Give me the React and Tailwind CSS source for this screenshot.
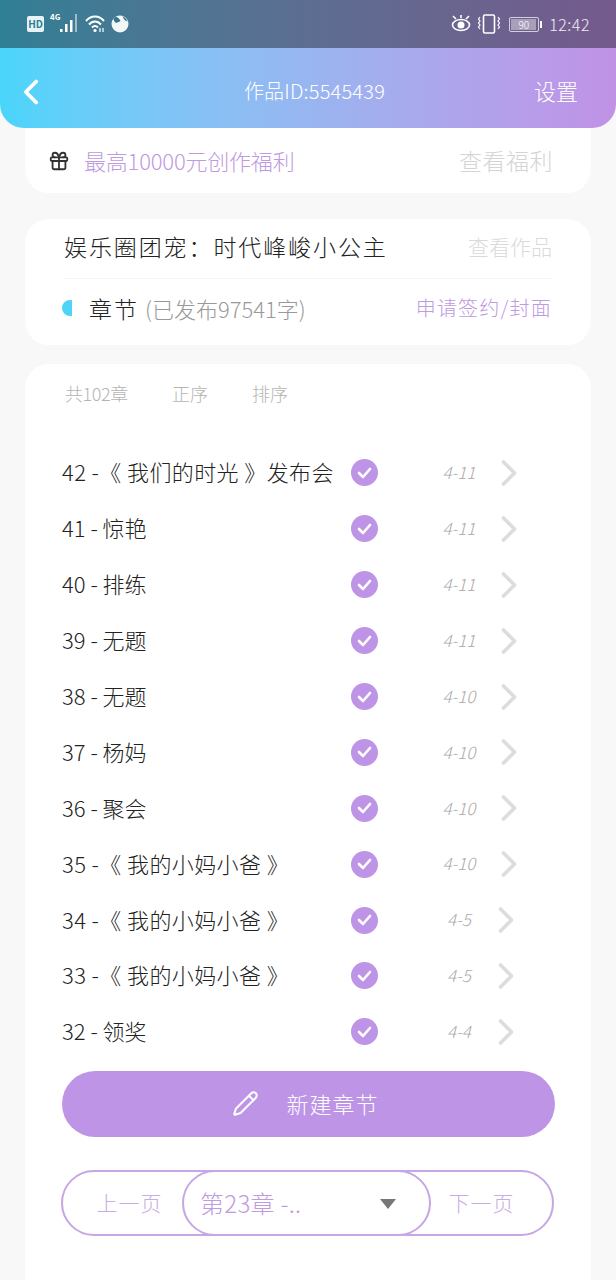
import { ChevronLeft, ChevronRight, Gift, Pencil } from 'lucide-react';

const chapters = [
    { title: '42 -《 我们的时光 》发布会', date: '4-11', wide: true },
    { title: '41 - 惊艳', date: '4-11' },
    { title: '40 - 排练', date: '4-11' },
    { title: '39 - 无题', date: '4-11' },
    { title: '38 - 无题', date: '4-10' },
    { title: '37 - 杨妈', date: '4-10' },
    { title: '36 - 聚会', date: '4-10' },
    { title: '35 -《 我的小妈小爸 》', date: '4-10', wide: true },
    { title: '34 -《 我的小妈小爸 》', date: '4-5', short: true, wide: true },
    { title: '33 -《 我的小妈小爸 》', date: '4-5', short: true, wide: true },
    { title: '32 - 领奖', date: '4-4', short: true },
];

function StatusBar() {
    return (
        <div className="h-12 flex items-center justify-between pl-[27px] pr-[26px] bg-gradient-to-r from-[#2f7f95] to-[#755a8d] text-white">
            <div className="flex items-center">
                <div className="w-[17px] h-[16px] rounded-[2px] bg-[#e8f3f6] text-[#2f7f95] text-[10px] leading-[16px] font-bold text-center">HD</div>
                <svg width="30" height="22" viewBox="0 0 30 22" className="ml-[6px] -mt-[2px]">
                    <text x="0" y="8" fontSize="8" fontWeight="700" fill="#fff">4G</text>
                    <rect x="10" y="17" width="2.5" height="3" fill="#fff" />
                    <rect x="15" y="12" width="2.5" height="8" fill="#fff" />
                    <rect x="20" y="8" width="2.5" height="12" fill="#fff" />
                    <rect x="25" y="2" width="2" height="18" fill="#ffffff80" />
                </svg>
                <svg width="21" height="18" viewBox="0 0 21 18" fill="none" stroke="#fff" strokeWidth="2" className="ml-[5px]">
                    <path d="M1 6 C6 0 14 0 19 6" />
                    <path d="M4 9.5 C7.5 5.5 12.5 5.5 16 9.5" />
                    <path d="M7 12.5 C9 10.5 11 10.5 13 12.5" />
                    <circle cx="10" cy="15.5" r="1.6" fill="#fff" stroke="none" />
                    <path d="M15 13 v4 M18 13 v4" strokeWidth="1.2" />
                </svg>
                <svg width="18" height="18" viewBox="0 0 18 18" className="ml-[5px]">
                    <circle cx="9" cy="9" r="8.5" fill="#f2f7f8" />
                    <path d="M5 1.5 C7 3 9 4 9.5 6 C9 7 6.5 7 5 8 C3.5 7 2.5 5 2.5 3.5 Z M11.5 1 C13.5 2 15.5 4 16.5 6.5 C14.5 6.5 12.5 4 11.5 1 Z" fill="#3a7590" />
                </svg>
            </div>
            <div className="flex items-center">
                <svg width="20" height="18" viewBox="0 0 20 18" fill="none" stroke="#fff" strokeWidth="1.6">
                    <path d="M2 1 L5 4 M18 1 L15 4 M10 0 V3" />
                    <ellipse cx="10" cy="10" rx="8.5" ry="5.5" />
                    <circle cx="10" cy="10" r="3.5" fill="#fff" stroke="none" />
                </svg>
                <svg width="24" height="20" viewBox="0 0 24 20" fill="none" stroke="#fff" strokeWidth="1.4" className="ml-[6px]">
                    <rect x="6.5" y="1" width="11" height="18" rx="1.5" strokeWidth="1.6" />
                    <path d="M3 3 L1.5 5 L3 7 L1.5 9 L3 11 L1.5 13 L3 15 M21 3 L22.5 5 L21 7 L22.5 9 L21 11 L22.5 13 L21 15" strokeWidth="1.2" />
                </svg>
                <div className="ml-[8px] w-[30px] h-[15px] border border-white/70 rounded-[2px] p-[1px]">
                    <div className="w-[25px] h-full bg-white/40 text-[10px] leading-[11px] text-center text-white">90</div>
                </div>
                <div className="w-[2px] h-[7px] bg-white ml-[1px]"></div>
                <span className="ml-[7px] text-[16px] font-light tracking-[0.5px] text-white/90">12:42</span>
            </div>
        </div>
    );
}

export default function App() {
    return (
        <div className="w-[616px] h-[1280px] overflow-hidden bg-[#f8f8f8] font-['Noto_Sans_CJK_SC',sans-serif] font-light">
            <StatusBar />

            {/* Header */}
            <div className="h-20 flex items-center justify-between pl-[10px] pr-[38px] pt-[5px] rounded-b-[24px] bg-gradient-to-r from-[#49d5fb] to-[#c092e6] text-white">
                <ChevronLeft size={42} strokeWidth={2.2} className="mt-[2px]" />
                <span className="text-[20px] tracking-[0.2px] ml-[43px]">作品ID:5545439</span>
                <span className="text-[22px]">设置</span>
            </div>

            {/* Benefit */}
            <div className="mx-[25px] h-[65px] flex items-center justify-between pl-[23px] pr-[38px] bg-white rounded-b-3xl">
                <div className="flex items-center gap-[14px]">
                    <Gift size={22} color="#333333" strokeWidth={2} />
                    <span className="text-[22px] text-[#c09adf] tracking-[-0.2px]">最高10000元创作福利</span>
                </div>
                <span className="text-[23px] text-[#d4d4d4] tracking-[0.5px]">查看福利</span>
            </div>

            {/* Work info */}
            <div className="mx-[25px] mt-[26px] h-[126px] bg-white rounded-3xl pl-[39px] pr-[39px]">
                <div className="h-[60px] pb-[4px] flex items-center justify-between border-b border-[#f5f5f5]">
                    <span className="text-[23px] text-[#222222] tracking-[1.9px]">娱乐圈团宠：时代峰峻小公主</span>
                    <span className="text-[21px] text-[#dadada]">查看作品</span>
                </div>
                <div className="h-[60px] pb-[2px] flex items-center justify-between">
                    <div className="flex items-center">
                        <div className="-ml-[2px] w-[10px] h-[16px] rounded-l-full bg-[#4fd4f7]"></div>
                        <span className="ml-[17px] text-[23px] text-[#222222] tracking-[2px]">章节</span>
                        <span className="ml-[6px] text-[22px] text-[#999999]">(已发布97541字)</span>
                    </div>
                    <span className="text-[20px] text-[#c09adf] tracking-[1.2px]">申请签约/封面</span>
                </div>
            </div>

            {/* Chapters */}
            <div className="mx-[25px] mt-[19px] h-[916px] bg-white rounded-t-3xl pt-[15px] pl-[37px]">
                <div className="flex items-center text-[18px] text-[#b4b4b4] pl-[3px] h-7">
                    <span className="w-[107px] tracking-[-0.4px]">共102章</span>
                    <span className="w-[80px]">正序</span>
                    <span>排序</span>
                </div>
                <div className="mt-[38px]">
                    {chapters.map((c) => (
                        <div key={c.title} className="h-[55.9px] flex items-center">
                            <span className={`w-[289px] text-[22px] text-[#222222] whitespace-nowrap -mt-[2px] ${c.wide ? 'tracking-[0.4px]' : ''}`}>{c.title}</span>
                            <div className="w-[27px] h-[27px] rounded-full bg-[#bd94e6] flex items-center justify-center">
                                <svg width="15" height="12" viewBox="0 0 15 12" fill="none" stroke="#fff" strokeWidth="2.6" strokeLinecap="round" strokeLinejoin="round">
                                    <path d="M2 6 L6 10 L13 2" />
                                </svg>
                            </div>
                            <span className="ml-[48px] w-[66px] text-center text-[17px] italic text-[#aaaaaa] -mt-[2px]">{c.date}</span>
                            <ChevronRight size={44} color="#dcdcdc" strokeWidth={2} className={c.short ? '-ml-[8px]' : '-ml-[5px]'} />
                        </div>
                    ))}
                </div>

                <button className="mt-[11px] w-[493px] h-[66px] pr-[6px] rounded-full bg-[#bd94e6] flex items-center justify-center text-white">
                    <Pencil size={27} strokeWidth={1.8} />
                    <span className="ml-[27px] text-[22px] tracking-[1px]">新建章节</span>
                </button>

                {/* Pager */}
                <div className="mt-[33px] -ml-[1px] w-[493px] h-[66px] rounded-full border-2 border-[#c7a6e6] flex items-center">
                    <span className="w-[119px] pl-[14px] text-center text-[21px] text-[#c9abe6] tracking-[1px]">上一页</span>
                    <div className="-my-[2px] w-[249px] h-[66px] rounded-full border-2 border-[#c7a6e6] flex items-center justify-between pl-[16px] pr-[33px] bg-white">
                        <span className="text-[24px] text-[#c09adf] tracking-[0.3px]">第23章 -..</span>
                        <div className="w-0 h-0 border-l-[8px] border-r-[8px] border-t-[10px] mt-[2px] border-l-transparent border-r-transparent border-t-[#777777]"></div>
                    </div>
                    <span className="flex-1 pr-[20px] text-center text-[21px] text-[#c9abe6] tracking-[1px]">下一页</span>
                </div>
            </div>
        </div>
    );
}
